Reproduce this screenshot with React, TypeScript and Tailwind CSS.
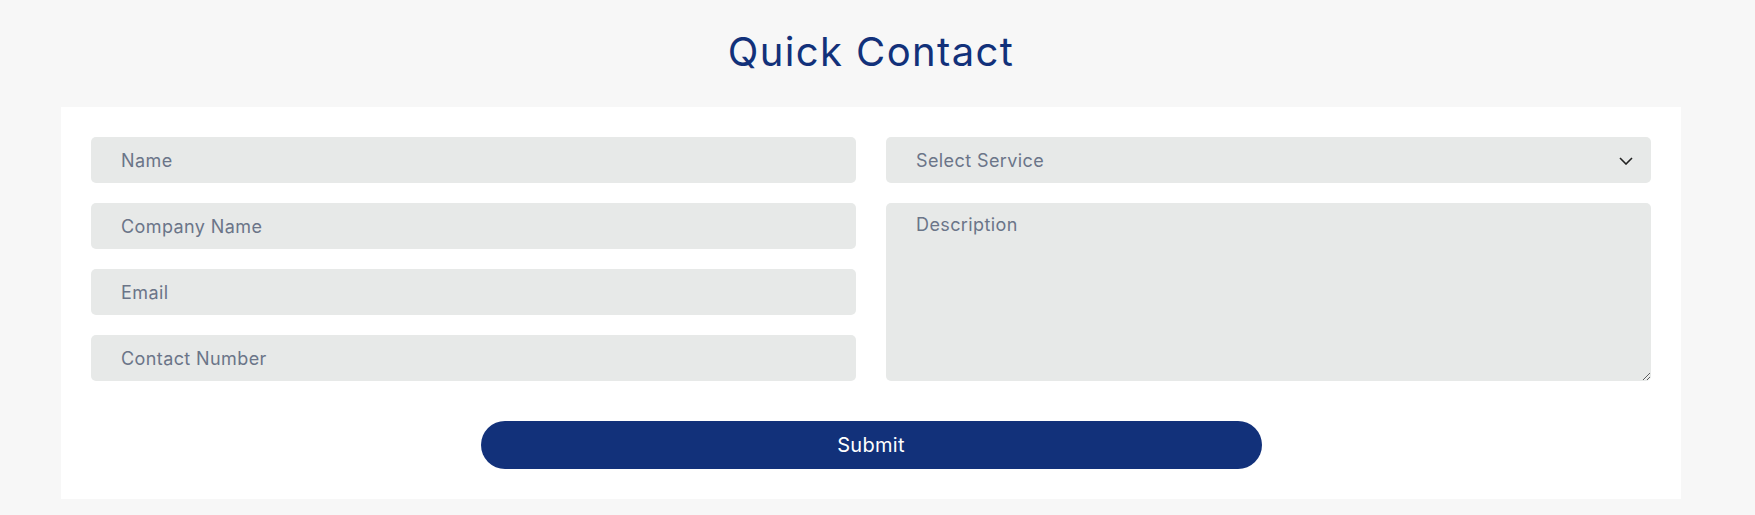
import { useState } from "react";

const fieldClass =
  "block w-full h-[46px] rounded-[5px] bg-[#e7e9e8] px-[30px] text-[18px] tracking-[0.4px] text-[#374151] placeholder:text-[#6b7588] outline-none";

export default function App() {
  const [service, setService] = useState("");

  return (
    <div
      className="h-[515px] overflow-hidden bg-[#f7f7f7] pt-[28px]"
      style={{ fontFamily: "Inter, 'Noto Sans', sans-serif" }}
    >
      <div className="ml-[61px] w-[1620px]">
        <h2 className="text-center text-[40px] leading-[48px] font-normal text-[#12317a] tracking-[1.4px]">
          Quick Contact
        </h2>

        <form
          onSubmit={(e) => e.preventDefault()}
          className="mt-[31px] bg-white p-[30px]"
        >
          <div className="grid grid-cols-2 gap-[30px]">
            <div className="flex flex-col gap-[20px]">
              <input type="text" placeholder="Name" className={fieldClass} />
              <input type="text" placeholder="Company Name" className={fieldClass} />
              <input type="email" placeholder="Email" className={fieldClass} />
              <input type="tel" placeholder="Contact Number" className={fieldClass} />
            </div>

            <div className="flex flex-col gap-[20px]">
              <div className="relative">
                <select
                  value={service}
                  onChange={(e) => setService(e.target.value)}
                  className="block w-full h-[46px] appearance-none rounded-[5px] bg-[#e7e9e8] px-[30px] text-[18px] tracking-[0.4px] text-[#6b7588] outline-none"
                >
                  <option value="">Select Service</option>
                  <option value="web">Web Development</option>
                  <option value="app">App Development</option>
                  <option value="seo">SEO</option>
                </select>
                {/* chevron */}
                <svg
                  className="pointer-events-none absolute right-[18px] top-[20px]"
                  width="14"
                  height="8"
                  viewBox="0 0 14 8"
                  fill="none"
                >
                  <path d="M1 1l6 6 6-6" stroke="#222" strokeWidth="1.6" />
                </svg>
              </div>
              <textarea
                placeholder="Description"
                className="block w-full h-[178px] rounded-[5px] bg-[#e7e9e8] px-[30px] pt-[8px] text-[18px] tracking-[0.4px] text-[#374151] placeholder:text-[#6b7588] outline-none"
              />
            </div>
          </div>

          <div className="mt-[40px] flex justify-center">
            <button
              type="submit"
              className="w-[781px] h-[48px] rounded-full bg-[#12317a] text-[20px] tracking-[0.3px] text-white"
            >
              Submit
            </button>
          </div>
        </form>
      </div>
    </div>
  );
}
